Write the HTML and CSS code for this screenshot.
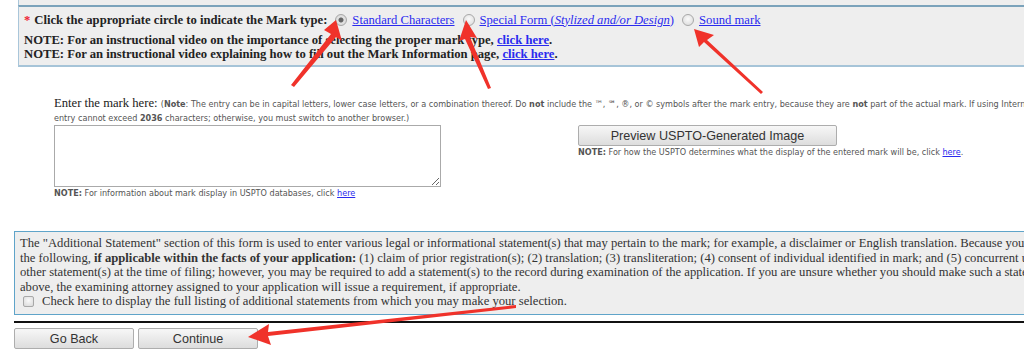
FILE: index.html
```html
<!DOCTYPE html>
<html lang="en">
<head>
  <meta charset="UTF-8" />
  <title>Mark Information</title>
  <link rel="stylesheet" href="styles.css">
</head>
<body>
  <div class="page">
    <!-- tail of the previous section -->
    <div class="prev-box"></div>

    <!-- Mark type -->
    <div class="mark-type">
      <div class="type-row">
        <span class="req">*</span> Click the appropriate circle to indicate the Mark type:
        <label class="choice"><input type="radio" name="mt" checked><a href="#">Standard Characters</a></label>
        <label class="choice"><input type="radio" name="mt"><a href="#">Special Form (<i>Stylized and/or Design</i>)</a></label>
        <label class="choice"><input type="radio" name="mt"><a href="#">Sound mark</a></label>
      </div>
      <div class="note-line first">NOTE: For an instructional video on the importance of selecting the proper mark type, <a href="#">click here</a>.</div>
      <div class="note-line">NOTE: For an instructional video explaining how to fill out the Mark Information page, <a href="#">click here</a>.</div>
    </div>

    <!-- Mark entry -->
    <div class="mark-entry">
      <p class="entry-label">Enter the mark here: <span class="small-note">(<b>Note</b>: The entry can be in capital letters, lower case letters, or a combination thereof. Do <b>not</b> include the ™, ℠, ®, or © symbols after the mark entry, because they are <b>not</b> part of the actual mark. If using Internet Explorer, the mark<br>entry cannot exceed <b>2036</b> characters; otherwise, you must switch to another browser.)</span></p>
      <div class="entry-row">
        <div class="entry-left">
          <textarea class="mark-input"></textarea>
          <div class="small-note"><b>NOTE:</b> For information about mark display in USPTO databases, click <a href="#">here</a></div>
        </div>
        <div class="entry-right">
          <button class="btn preview-btn">Preview USPTO-Generated Image</button>
          <div class="small-note"><b>NOTE:</b> For how the USPTO determines what the display of the entered mark will be, click <a href="#">here</a>.</div>
        </div>
      </div>
    </div>

    <!-- Additional statement -->
    <div class="statement">
      The "Additional Statement" section of this form is used to enter various legal or informational statement(s) that may pertain to the mark; for example, a disclaimer or English translation. Because you should only enter<br>
      the following, <b>if applicable within the facts of your application:</b> (1) claim of prior registration(s); (2) translation; (3) transliteration; (4) consent of individual identified in mark; and (5) concurrent use, do not enter<br>
      other statement(s) at the time of filing; however, you may be required to add a statement(s) to the record during examination of the application. If you are unsure whether you should make such a statement as listed<br>
      above, the examining attorney assigned to your application will issue a requirement, if appropriate.
      <label class="check-row"><input type="checkbox">Check here to display the full listing of additional statements from which you may make your selection.</label>
    </div>

    <div class="rule"></div>

    <div class="actions">
      <button class="btn nav-btn">Go Back</button>
      <button class="btn nav-btn">Continue</button>
    </div>

    <!-- annotation arrows -->
    <svg class="arrows" width="1024" height="361" viewBox="0 0 1024 361">
      <g fill="#f0322a">
        <polygon points="336,20 342,41 336,37 294,87 291,85 331,34 324,30"/>
        <polygon points="466,20 477,38 470,37 491,88 488,89 465,39 459,41"/>
        <polygon points="694,29 714,35 707,40 763,92 761,94 704,42 699,47"/>
        <polygon points="248,337 269,324 268,332 516,305 516,308 268,336 271,345"/>
      </g>
    </svg>
  </div>
</body>
</html>
```

FILE: styles.css
```css
body {
  margin: 0;
  background-color: #fff;
  font-family: "Liberation Serif", "Times New Roman", serif;
  font-size: 12.65px;
  color: #222;
  overflow: hidden;
}

.page {
  position: relative;
  width: 1024px;
  height: 361px;
  overflow: hidden;
}

a {
  color: #2a2aee;
}

input[type="radio"],
input[type="checkbox"] {
  appearance: none;
  -webkit-appearance: none;
  box-sizing: border-box;
  border: 1px solid #a8a8a8;
  background: radial-gradient(circle at 50% 40%, #fafafa, #d8d8d8);
  flex: 0 0 auto;
}

input[type="radio"] {
  border-radius: 50%;
  width: 12px;
  height: 12px;
}

input[type="radio"]:checked {
  background: radial-gradient(circle, #666 0, #666 2px, #e4e4e4 3px, #d0d0d0 100%);
}

input[type="checkbox"] {
  border-radius: 2px;
  width: 11px;
  height: 11px;
}

.prev-box {
  margin-left: 18px;
  width: 1100px;
  height: 5px;
  background-color: #eee;
  border-left: 1px solid #a9c6da;
}

.mark-type {
  margin-left: 18px;
  width: 1100px;
  height: 62px;
  background-color: #eee;
  border-top: 2px solid #7ba3bb;
  border-left: 1px solid #a9c6da;
  border-bottom: 2px solid #a6c4d8;
  padding: 3px 0 0 5px;
  box-sizing: border-box;
  font-weight: bold;
}

.type-row {
  display: flex;
  align-items: center;
  height: 20px;
  white-space: nowrap;
}

.req {
  color: #e23;
  margin-right: 4px;
}

.choice {
  display: flex;
  align-items: center;
  font-weight: normal;
  margin-left: 8px;
}

.choice input {
  margin: 0 5px 0 0;
}

.note-line {
  line-height: 14px;
  white-space: nowrap;
}

.note-line.first {
  margin-top: 3px;
}

.mark-entry {
  padding-left: 54px;
  margin-top: 30px;
}

.entry-label {
  margin: 0;
  line-height: 13px;
  white-space: nowrap;
  color: #222;
}

.small-note {
  font-family: "DejaVu Sans Condensed", "DejaVu Sans", Verdana, sans-serif;
  font-size: 9px;
  color: #555;
  line-height: 13px;
  white-space: nowrap;
}

.entry-row {
  display: flex;
  margin-top: 0;
}

.entry-left {
  width: 524px;
}

.mark-input {
  display: block;
  width: 387px;
  height: 62px;
  margin: 0;
  border: 1px solid #aaa;
  box-sizing: border-box;
  resize: both;
}

.btn {
  font-family: "Liberation Sans", Arial, sans-serif;
  font-size: 12.6px;
  color: #333;
  background: linear-gradient(#f7f7f7, #dddddd);
  border: 1px solid #adadad;
  border-radius: 2px;
  padding: 0;
  box-sizing: border-box;
}

.preview-btn {
  display: block;
  width: 259px;
  height: 21px;
  margin-bottom: 0;
}

.statement {
  margin: 31px 0 0 14px;
  width: 1100px;
  height: 84px;
  background-color: #eee;
  border: 1px solid #5fa4c9;
  box-sizing: border-box;
  padding: 4px 5px 0;
  line-height: 14.5px;
  color: #333;
  white-space: nowrap;
}

.check-row {
  display: flex;
  align-items: center;
  margin-left: 3px;
}

.check-row input {
  margin: 0 8px 0 0;
}

.rule {
  margin: 6px 0 0 14px;
  height: 2px;
  background-color: #111;
}

.actions {
  display: flex;
  gap: 4px;
  margin: 5px 0 0 14px;
}

.nav-btn {
  width: 120px;
  height: 21px;
}

.arrows {
  position: absolute;
  left: 0;
  top: 0;
  pointer-events: none;
}
```
